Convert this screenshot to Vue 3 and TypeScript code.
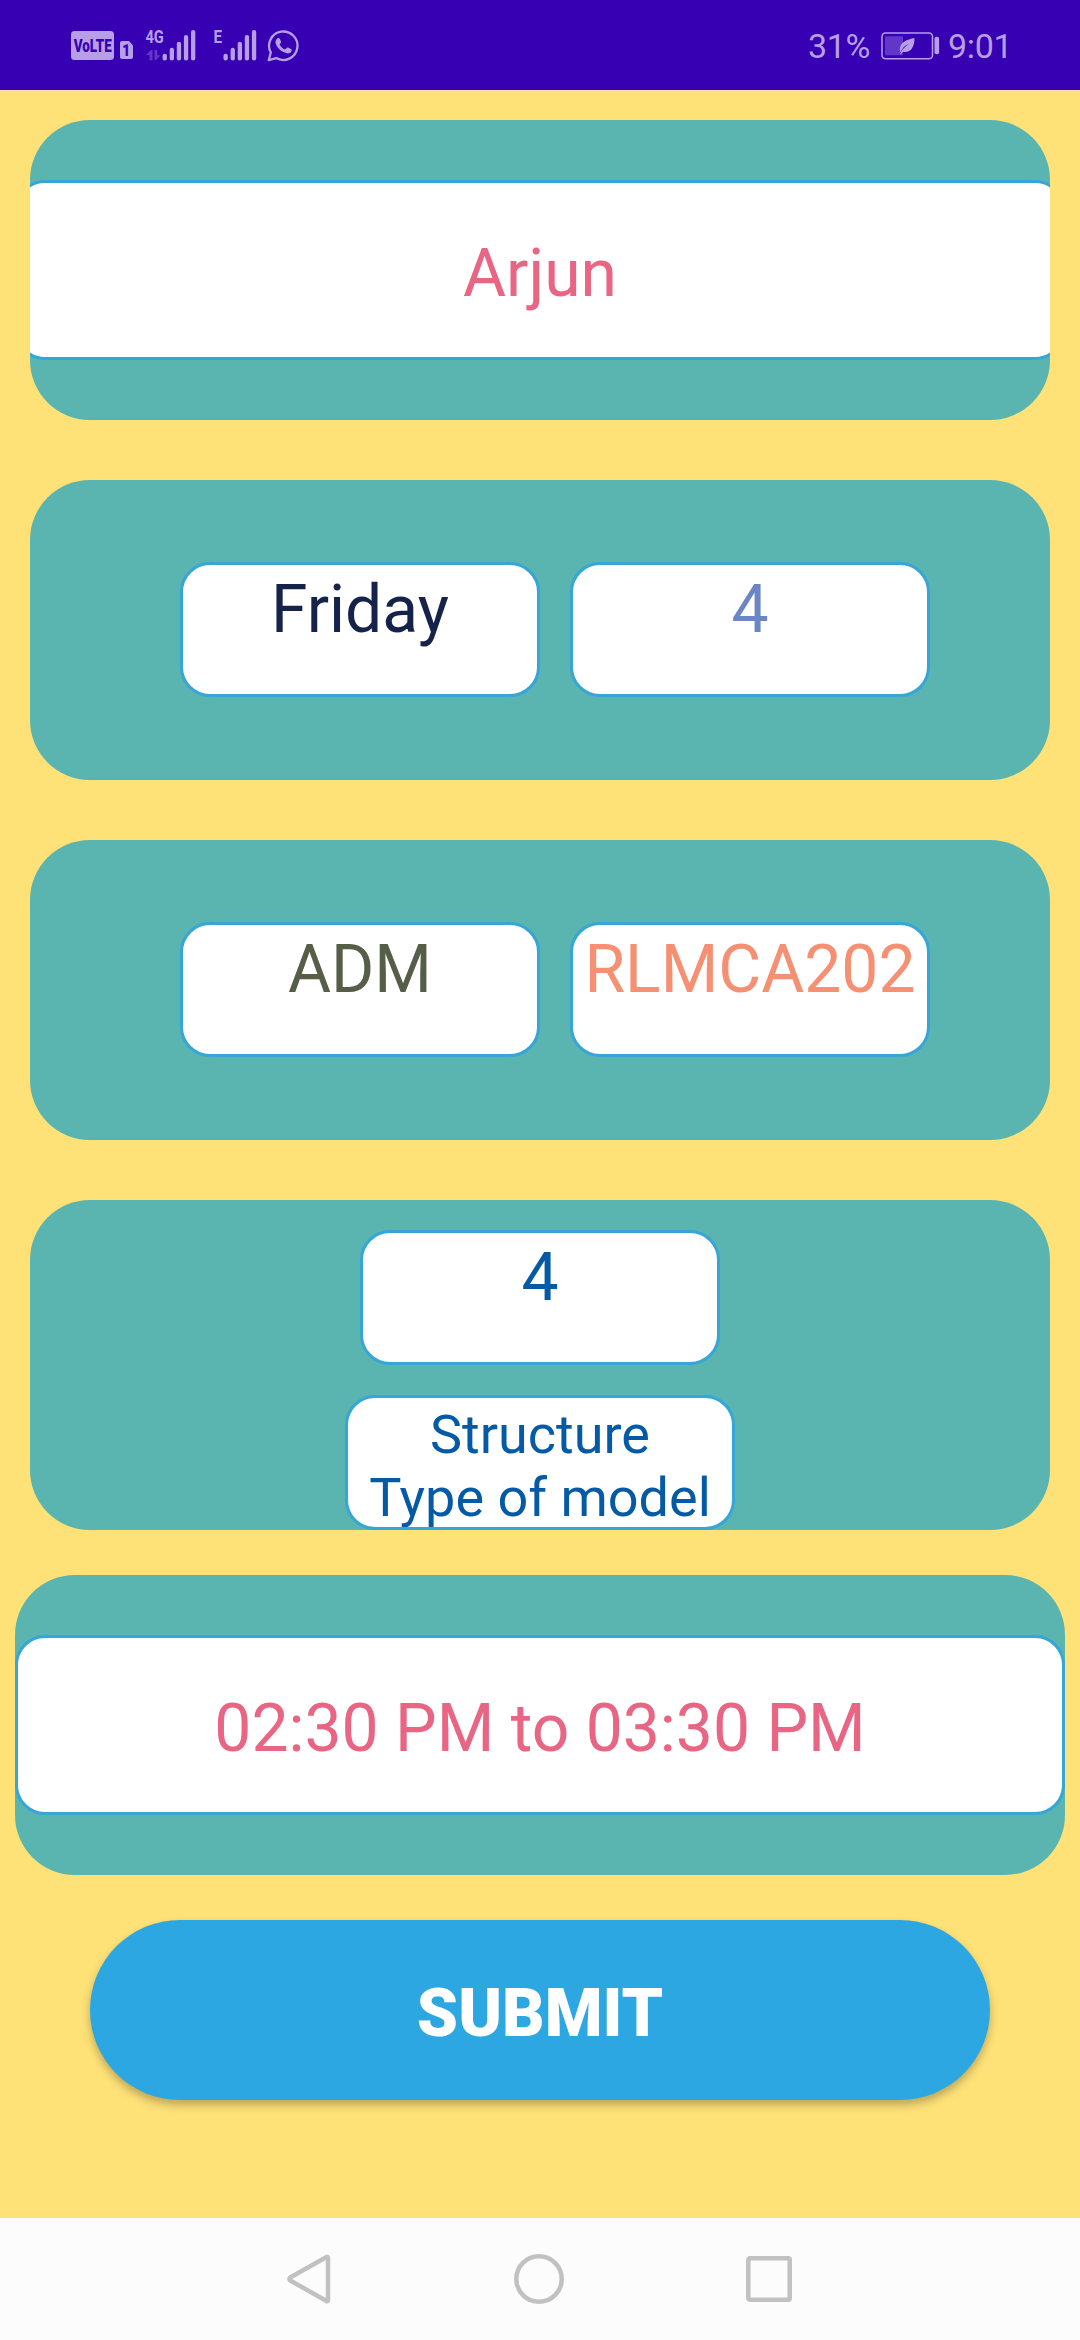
<script setup lang="ts">
interface Field {
  text: string
  tone: string
}

const dayRow: Field[] = [
  { text: 'Friday', tone: 'navy' },
  { text: '4', tone: 'periwinkle' },
]
const subjectRow: Field[] = [
  { text: 'ADM', tone: 'olive' },
  { text: 'RLMCA202', tone: 'salmon' },
]
const rows: Field[][] = [dayRow, subjectRow]

const barTops: number[] = [23.7, 17.7, 11.7, 5, 0]
</script>

<template>
  <div class="screen">
    <header class="status">
      <div class="status-left">
        <svg class="volte" width="43" height="29" viewBox="0 0 43 29">
          <rect width="43" height="29" rx="3.5" class="ink" />
          <text x="2.7" y="20.6" font-size="17.5" font-weight="900" textLength="38" lengthAdjust="spacingAndGlyphs" class="knock">VoLTE</text>
        </svg>
        <svg class="sim" width="13" height="18" viewBox="0 0 13 18">
          <path d="M2 0H9L13 4.5V16Q13 18 11 18H2Q0 18 0 16V2Q0 0 2 0Z" class="ink" />
          <text x="2.3" y="14.6" font-size="16" font-weight="900" textLength="8" lengthAdjust="spacingAndGlyphs" class="knock">1</text>
        </svg>
        <svg class="signal-4g" width="50" height="31" viewBox="0 0 50 31">
          <text x="-0.6" y="13.4" font-size="19" font-weight="700" textLength="18.4" lengthAdjust="spacingAndGlyphs" class="ink">4G</text>
          <path d="M0 25L5 20H6.500V30.300H3.500V25ZM8.500 20H11.200V25.300H14.700L9.700 30.300H8.500Z" class="dim" />
          <rect v-for="(top, i) in barTops" :key="i" :x="16.600 + i * 7.100" :y="top" width="4.300" :height="30.500 - top" rx="2.100" class="ink" />
        </svg>
        <svg class="signal-e" width="43" height="31" viewBox="0 0 43 31">
          <text x="-0.5" y="13.4" font-size="19" font-weight="700" textLength="8.600" lengthAdjust="spacingAndGlyphs" class="ink">E</text>
          <rect v-for="(top, i) in barTops" :key="i" :x="9.500 + i * 7.100" :y="top" width="4.300" :height="30.500 - top" rx="2.100" class="ink" />
        </svg>
        <svg class="whatsapp" width="32" height="32" viewBox="0 0 32 32">
          <path d="M1.700 30.200L3.800 22.500A14.200 14.200 0 1 1 9.300 28.100Z" class="line" stroke-width="2.300" stroke-linejoin="round" />
          <path d="M10.400 8.500c.8-.7 2-.6 2.400.3l1.200 2.800c.2.600.1 1-.3 1.500l-1.100 1.400c1.300 2.400 3 4 5.500 5.100l1.500-1.700c.4-.5.9-.6 1.500-.3l2.800 1.300c.8.400.9 1 .7 1.800-.5 2-2.700 3-4.700 2.600-5.800-1.200-10-5.500-11.300-10.200-.4-1.900.5-3.600 1.800-4.600Z" class="ink" />
        </svg>
      </div>
      <div class="status-right">
        <span class="percent">31%</span>
        <svg class="battery" width="59" height="28" viewBox="0 0 59 28">
          <rect x="1" y="1" width="50.500" height="25.800" rx="3.500" class="line" stroke-width="1.500" />
          <rect x="4" y="4.200" width="18" height="19" rx="1" class="dim" />
          <path d="M33.500 6C26 7.500 19 10 18.800 17.500L19.200 20.500C21 16 24 13.600 28 11.800C24.500 14.500 21 17.200 19 22.300L20.200 22C21 20.700 21.700 20 22.300 19.800C29 21.300 33.500 16 33.500 6Z" class="ink" />
          <rect x="53.500" y="4.800" width="4.600" height="17.500" rx="2" class="ink" />
        </svg>
        <span class="clock">9:01</span>
      </div>
    </header>

    <main class="content">
      <section class="card name-card">
        <div class="field tall name-field pink">Arjun</div>
      </section>

      <section v-for="(row, r) in rows" :key="r" class="card pair-card">
        <div v-for="field in row" :key="field.text" class="field" :class="field.tone">{{ field.text }}</div>
      </section>

      <section class="card topic-card">
        <div class="field blue">4</div>
        <div class="field topic blue">Structure<br />Type of model</div>
      </section>

      <section class="card time-card">
        <div class="field tall pink">02:30 PM to 03:30 PM</div>
      </section>

      <button class="submit" type="button">SUBMIT</button>
    </main>

    <nav class="navbar">
      <svg width="44" height="50" viewBox="0 0 44 50">
        <path d="M40 2.800L3.200 23.500Q1.800 25 3.200 26.500L40 47.200Q41 47.200 41 46V4Q41 2.800 40 2.800Z" stroke-linejoin="round" />
      </svg>
      <svg width="50" height="50" viewBox="0 0 50 50">
        <circle cx="25" cy="25" r="22.700" />
      </svg>
      <svg width="46" height="46" viewBox="0 0 46 46">
        <rect x="2.300" y="2.300" width="41.400" height="41.400" rx="1.500" />
      </svg>
    </nav>
  </div>
</template>

<style>
body {
  margin: 0;
}
</style>

<style scoped>
.screen {
  width: 1080px;
  height: 2340px;
  display: flex;
  flex-direction: column;
  overflow: hidden;
  background: #fee177;
  font-family: Roboto, sans-serif;
}

.status {
  box-sizing: border-box;
  height: 91px;
  flex: none;
  display: flex;
  justify-content: space-between;
  padding-left: 71px;
  background: #3700b3;
  border-bottom: 1px solid #fcd9b0;
  color: #b79ee6;
}

.status-left,
.status-right {
  display: flex;
  align-items: flex-start;
}

.status-right {
  width: 272px;
}

.status svg {
  display: block;
  flex: none;
  overflow: visible;
}

.ink {
  fill: #b79ee6;
}

.knock {
  fill: #3700b3;
}

.dim {
  fill: #6236c8;
}

.line {
  fill: none;
  stroke: #b79ee6;
}

.volte {
  margin-top: 31px;
}

.sim {
  margin: 41px 0 0 6px;
}

.signal-4g {
  margin: 30px 0 0 13px;
}

.signal-e {
  margin: 30px 0 0 18px;
}

.whatsapp {
  margin: 30px 0 0 10px;
}

.percent,
.clock {
  margin-top: 26px;
  font-size: 34px;
  line-height: 40px;
  letter-spacing: -0.3px;
  white-space: nowrap;
}

.percent {
  width: 73px;
}

.battery {
  margin: 32px 8px 0 0;
}

.content {
  flex: 1;
  display: flex;
  flex-direction: column;
  align-items: center;
  padding-top: 29px;
}

.card {
  box-sizing: border-box;
  flex: none;
  width: 1020px;
  height: 300px;
  display: flex;
  align-items: center;
  justify-content: center;
  border-radius: 60px;
  background: #5ab4b0;
}

.name-card {
  overflow: hidden;
}

.pair-card {
  gap: 30px;
  margin-top: 60px;
  padding: 0 0 1px 30px;
}

.topic-card {
  height: 330px;
  margin-top: 60px;
  flex-direction: column;
  justify-content: flex-start;
  gap: 30px;
  padding-top: 30px;
}

.time-card {
  width: 1050px;
  margin-top: 45px;
}

.field {
  box-sizing: border-box;
  flex: none;
  width: 360px;
  height: 135px;
  padding-top: 6px;
  overflow: hidden;
  border: 3px solid #36a6d8;
  border-radius: 30px;
  background: #fff;
  font-size: 66px;
  line-height: 77px;
  text-align: center;
  white-space: nowrap;
}

.tall {
  width: 1050px;
  height: 180px;
  padding-top: 52px;
}

.topic {
  width: 390px;
  padding-top: 5px;
  font-size: 54px;
  line-height: 63px;
}

.pink {
  color: #e86584;
}

.navy {
  color: #15234b;
}

.periwinkle {
  color: #6a86c4;
}

.olive {
  color: #575e47;
}

.salmon {
  color: #f69073;
}

.blue {
  color: #055aa6;
}

.submit {
  flex: none;
  width: 900px;
  height: 180px;
  margin-top: 45px;
  padding: 7px 0 0;
  border: 0;
  border-radius: 90px;
  background: #2da7e1;
  box-shadow: 0 5px 8px rgba(0, 0, 0, 0.26);
  color: #fff;
  font-family: inherit;
  font-size: 66px;
  font-weight: 900;
  line-height: 77px;
  text-align: center;
}

.navbar {
  flex: none;
  height: 122px;
  display: flex;
  align-items: center;
  justify-content: space-between;
  box-sizing: border-box;
  padding: 0 288px 0 287px;
  background: #fcfcfc;
}

.navbar svg {
  fill: none;
  stroke: #c1c1c1;
  stroke-width: 4.5;
}
</style>
